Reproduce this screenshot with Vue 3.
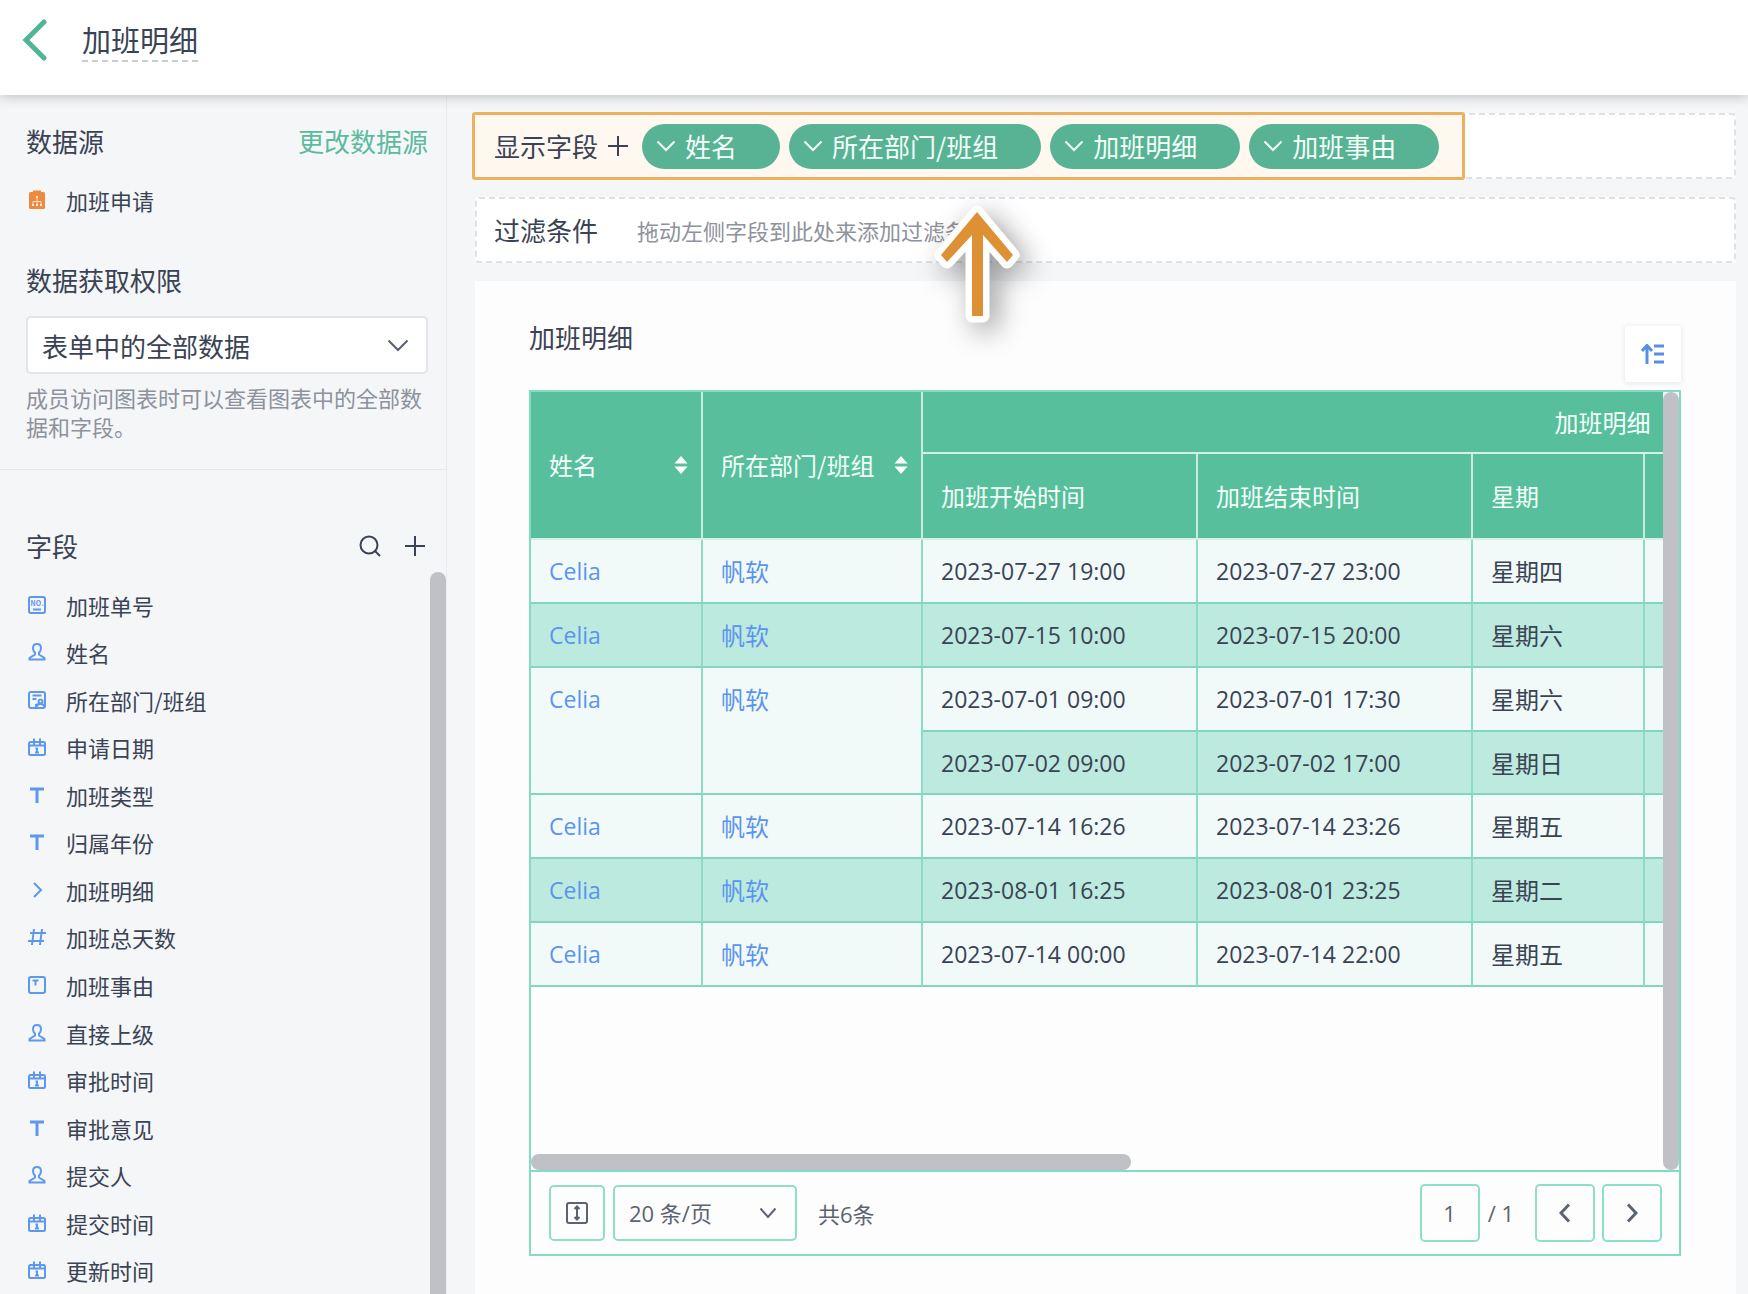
<template>
  <div class="page">
    <header class="topbar">
      <button class="back" type="button" aria-label="返回">
        <svg width="26" height="42" viewBox="0 0 26 42">
          <path d="M22 3L4 21l18 18" />
        </svg>
      </button>
      <h1 class="topbar-title">加班明细</h1>
    </header>

    <div class="body">
      <aside class="sidebar">
        <section class="source">
          <div class="row-between">
            <h2>数据源</h2>
            <a class="change-link" href="#">更改数据源</a>
          </div>
          <div class="source-form">
            <svg class="icon" width="18" height="20" viewBox="0 0 18 20">
              <path
                class="solid"
                d="M2.500 2H5V.5h8V2h2.500A1.500 1.500 0 0 1 17 3.500v14a1.500 1.500 0 0 1-1.500 1.500h-13A1.500 1.500 0 0 1 1 17.500v-14A1.500 1.500 0 0 1 2.500 2z"
              />
              <path class="lines" d="M9 8v6M5 14v-2.500h8V14" />
              <path class="dots" d="M8 6h2v2H8zM4 14h2v2H4zM8 14h2v2H8zM12 14h2v2h-2z" />
            </svg>
            <span>加班申请</span>
          </div>
          <h2><label for="scope">数据获取权限</label></h2>
          <div class="select-box scope">
            <select id="scope" v-model="scope">
              <option>表单中的全部数据</option>
            </select>
            <svg width="22" height="13" viewBox="0 0 22 13">
              <path d="M1.500 1.500L11 11l9.500-9.500" />
            </svg>
          </div>
          <p class="hint">成员访问图表时可以查看图表中的全部数据和字段。</p>
        </section>

        <section class="fields">
          <div class="row-between fields-head">
            <h2>字段</h2>
            <div class="tools">
              <button type="button" aria-label="搜索">
                <svg width="22" height="22" viewBox="0 0 22 22">
                  <circle cx="10" cy="10" r="8.500" />
                  <path d="M16 16l5 5" />
                </svg>
              </button>
              <button type="button" aria-label="添加字段">
                <svg width="22" height="22" viewBox="0 0 22 22">
                  <path d="M11 1v20M1 11h20" />
                </svg>
              </button>
            </div>
          </div>
          <div class="fields-scroll">
            <ul class="field-list">
              <li v-for="field in fields" :key="field.name">
                <svg class="field-icon" width="18" height="18" viewBox="0 0 18 18">
                  <path :d="icons[field.type]" :class="{ bold: field.type === 'text' }" />
                  <text v-if="field.type === 'serial'" x="9" y="10" text-anchor="middle">NO.</text>
                </svg>
                <span>{{ field.name }}</span>
              </li>
            </ul>
            <div class="thumb"></div>
          </div>
        </section>
      </aside>

      <main class="main">
        <div class="shelf">
          <div class="shelf-active">
            <span class="shelf-label">显示字段</span>
            <button class="add" type="button" aria-label="添加显示字段">
              <svg width="22" height="22" viewBox="0 0 22 22">
                <path d="M11 1v20M1 11h20" />
              </svg>
            </button>
            <button v-for="item in shown" :key="item" class="pill" type="button">
              <svg width="20" height="12" viewBox="0 0 20 12">
                <path d="M1.500 1.500L10 10l8.500-8.500" />
              </svg>
              <span>{{ item }}</span>
            </button>
          </div>
        </div>

        <div class="shelf filter">
          <span class="shelf-label">过滤条件</span>
          <span class="filter-hint">拖动左侧字段到此处来添加过滤条件</span>
          <svg class="arrow" width="100" height="132" viewBox="0 0 100 132">
            <path
              d="M50 9L86 52L80 59L56 32V113H45V32L20 59L14 52Z"
              fill="#fff"
              stroke="#fff"
              stroke-width="13"
              stroke-linejoin="round"
            />
            <path d="M50 9L86 52L80 59L56 32V113H45V32L20 59L14 52Z" fill="#dd9134" />
          </svg>
        </div>

        <section class="panel">
          <div class="panel-head">
            <h2>加班明细</h2>
            <button class="sort" type="button" aria-label="排序">
              <svg width="24" height="20" viewBox="0 0 24 20">
                <path d="M6 20V2M1 7l5-5.500L11 7M13 2h10M13 10h10M13 18h10" />
              </svg>
            </button>
          </div>

          <div class="grid">
            <div class="grid-view">
              <div class="table-clip">
                <table>
                  <colgroup>
                    <col class="c-name" />
                    <col class="c-dept" />
                    <col class="c-time" />
                    <col class="c-time" />
                    <col class="c-name" />
                    <col class="c-rest" />
                  </colgroup>
                  <thead>
                    <tr class="h-top">
                      <th v-for="name in sortable" :key="name" rowspan="2">
                        <div class="th-sort">
                          <span>{{ name }}</span>
                          <svg width="14" height="18" viewBox="0 0 14 18">
                            <path d="M7 0l6.500 7.500H.5zM7 18L.5 10.500h13z" />
                          </svg>
                        </div>
                      </th>
                      <th class="group" colspan="4">加班明细</th>
                    </tr>
                    <tr class="h-sub">
                      <th>加班开始时间</th>
                      <th>加班结束时间</th>
                      <th>星期</th>
                      <th></th>
                    </tr>
                  </thead>
                  <tbody>
                    <template v-for="(rec, i) in records" :key="i">
                      <tr v-for="(line, j) in rec.lines" :key="j" :class="{ striped: line.striped }">
                        <template v-if="j === 0">
                          <td :rowspan="rec.lines.length"><a href="#">Celia</a></td>
                          <td class="cjk" :rowspan="rec.lines.length"><a href="#">帆软</a></td>
                        </template>
                        <td>{{ line.start }}</td>
                        <td>{{ line.end }}</td>
                        <td class="cjk">{{ line.day }}</td>
                        <td></td>
                      </tr>
                    </template>
                  </tbody>
                </table>
              </div>
              <div class="vbar"><div class="thumb"></div></div>
              <div class="hbar"><div class="thumb"></div></div>
            </div>

            <div class="pager">
              <button class="pager-btn density" type="button" aria-label="行高">
                <svg width="22" height="22" viewBox="0 0 22 22">
                  <rect x="1" y="1" width="20" height="20" rx="2" />
                  <path d="M11 5v12M8.500 7L11 4.500 13.500 7M8.500 15l2.500 2.500 2.500-2.500" />
                </svg>
              </button>
              <div class="select-box page-size">
                <select v-model="pageSize" aria-label="每页条数">
                  <option>20 条/页</option>
                </select>
                <svg width="18" height="12" viewBox="0 0 18 12">
                  <path d="M1.500 1.500L9 10l7.500-8.500" />
                </svg>
              </div>
              <span class="total">共6条</span>
              <input v-model="page" class="page-input" type="text" aria-label="页码" />
              <span class="page-count">/ 1</span>
              <button class="pager-btn prev" type="button" aria-label="上一页">
                <svg width="12" height="20" viewBox="0 0 12 20"><path d="M10 1.500L2 10l8 8.500" /></svg>
              </button>
              <button class="pager-btn next" type="button" aria-label="下一页">
                <svg width="12" height="20" viewBox="0 0 12 20"><path d="M2 1.500l8 8.500-8 8.500" /></svg>
              </button>
            </div>
          </div>
        </section>
      </main>
    </div>
  </div>
</template>

<script setup>
import { ref } from "vue";

const scope = ref("表单中的全部数据");
const pageSize = ref("20 条/页");
const page = ref("1");

const box = "M3 1h12a2 2 0 0 1 2 2v12a2 2 0 0 1-2 2H3a2 2 0 0 1-2-2V3a2 2 0 0 1 2-2z";

const icons = {
  serial: box + "M5 13.500h8",
  user: "M9 1C6.500 1 5 2.800 5 5.200c0 2 .9 3.300 2 4.500v1.800L1.500 15v1.500h15V15L11 11.500V9.700c1.100-1.200 2-2.500 2-4.500C13 2.800 11.500 1 9 1z",
  dept: box + "M4.500 4.500h9M4.500 8h4M8 16v-2l2.500-1.200M12.500 8.500a2 2 0 1 0 .1 0M8.500 16.500c0-2 1.500-3.500 4-3.500s4 1.500 4 3.500",
  date: "M2.500 4h13a1.500 1.500 0 0 1 1.500 1.500v10a1.500 1.500 0 0 1-1.500 1.500h-13A1.500 1.500 0 0 1 1 15.500v-10A1.500 1.500 0 0 1 2.500 4zM6 .5v6M12 .5v6M1 7.500h16M7.500 10.500H9v4M7 14.500h4",
  text: "M2 3h14M9 3v14",
  sub: "M6 2l7 7-7 7",
  number: "M6 1L4 17M14 1l-2 16M2 5h16M0 13h16",
  area: box + "M4.500 4.500h6M7.500 4.500v5",
};

const fields = [
  { name: "加班单号", type: "serial" },
  { name: "姓名", type: "user" },
  { name: "所在部门/班组", type: "dept" },
  { name: "申请日期", type: "date" },
  { name: "加班类型", type: "text" },
  { name: "归属年份", type: "text" },
  { name: "加班明细", type: "sub" },
  { name: "加班总天数", type: "number" },
  { name: "加班事由", type: "area" },
  { name: "直接上级", type: "user" },
  { name: "审批时间", type: "date" },
  { name: "审批意见", type: "text" },
  { name: "提交人", type: "user" },
  { name: "提交时间", type: "date" },
  { name: "更新时间", type: "date" },
];

const shown = ["姓名", "所在部门/班组", "加班明细", "加班事由"];
const sortable = ["姓名", "所在部门/班组"];

const records = [
  { lines: [{ start: "2023-07-27 19:00", end: "2023-07-27 23:00", day: "星期四" }] },
  { lines: [{ start: "2023-07-15 10:00", end: "2023-07-15 20:00", day: "星期六", striped: true }] },
  {
    lines: [
      { start: "2023-07-01 09:00", end: "2023-07-01 17:30", day: "星期六" },
      { start: "2023-07-02 09:00", end: "2023-07-02 17:00", day: "星期日", striped: true },
    ],
  },
  { lines: [{ start: "2023-07-14 16:26", end: "2023-07-14 23:26", day: "星期五" }] },
  { lines: [{ start: "2023-08-01 16:25", end: "2023-08-01 23:25", day: "星期二", striped: true }] },
  { lines: [{ start: "2023-07-14 00:00", end: "2023-07-14 22:00", day: "星期五" }] },
];
</script>

<style>
body {
  margin: 0;
}
</style>

<style scoped>
.page {
  display: flex;
  flex-direction: column;
  min-height: 100vh;
  background: #f4f6f8;
  color: #3a4354;
  font-family: "Noto Sans CJK SC", sans-serif;
  font-size: 22px;
}

.page *,
.page *::before {
  box-sizing: border-box;
}

h1,
h2,
p,
ul {
  margin: 0;
  padding: 0;
  font-weight: 400;
}

h2 {
  font-size: 26px;
  line-height: 32px;
}

button,
input,
select {
  font: inherit;
  color: inherit;
  padding: 0;
  border: 0;
  background: none;
}

button {
  cursor: pointer;
}

svg {
  display: block;
  flex: none;
  fill: none;
  stroke: currentColor;
  stroke-width: 2;
}

a {
  color: #5b94ee;
  text-decoration: none;
}

/* top bar */
.topbar {
  display: flex;
  align-items: center;
  gap: 34px;
  height: 95px;
  padding: 0 22px 15px;
  background: #fff;
  box-shadow: 0 1px 12px rgba(0, 0, 0, 0.25);
  z-index: 2;
}

.back {
  color: #52b496;
}

.back svg {
  stroke-width: 5;
  stroke-linecap: round;
}

.topbar-title {
  font-size: 29px;
  line-height: 42px;
  border-bottom: 2px dashed #c9ccd1;
}

.body {
  display: flex;
  flex: 1;
}

/* sidebar */
.sidebar {
  display: flex;
  flex-direction: column;
  flex: none;
  width: 447px;
  border-right: 1px solid #e9ebee;
}

.row-between {
  display: flex;
  align-items: center;
  justify-content: space-between;
}

.source {
  padding: 30px 18px 28px 26px;
  border-bottom: 1px solid #e6e8eb;
}

.change-link {
  color: #5cbb9e;
  font-size: 26px;
  line-height: 32px;
}

.source-form {
  display: flex;
  align-items: center;
  gap: 20px;
  height: 32px;
  margin: 27px 0 48px;
}

.source-form .icon {
  margin-left: 2px;
  stroke: none;
}

.icon .solid {
  fill: #ee8a40;
}

.icon .lines {
  stroke: #fbdcc4;
  stroke-width: 1;
}

.icon .dots {
  fill: #fff1e6;
}

.select-box {
  display: grid;
  align-items: center;
  background: #fff;
  border: 2px solid #e3e5e8;
  border-radius: 5px;
}

.select-box select {
  grid-area: 1 / 1;
  appearance: none;
  width: 100%;
  height: 100%;
}

.select-box svg {
  grid-area: 1 / 1;
  justify-self: end;
  pointer-events: none;
}

.scope {
  height: 58px;
  margin: 20px 0 9px;
}

.scope select {
  padding-left: 14px;
  font-size: 26px;
}

.scope svg {
  margin-right: 17px;
  color: #596170;
}

.hint {
  color: #8d929c;
  line-height: 29px;
}

.fields {
  display: flex;
  flex-direction: column;
  flex: 1;
}

.fields-head {
  padding: 60px 20px 10px 26px;
}

.tools {
  display: flex;
  gap: 23px;
}

.fields-scroll {
  display: flex;
  flex: 1;
}

.field-list {
  display: grid;
  grid-auto-rows: 1fr;
  flex: 1;
  padding: 9px 0 0 28px;
  list-style: none;
}

.field-list li {
  display: flex;
  align-items: center;
  gap: 20px;
  line-height: 32px;
}

.field-icon {
  color: #5e97ee;
  overflow: visible;
}

.field-icon .bold {
  stroke-width: 3;
}

.field-icon text {
  font-size: 7px;
  font-weight: 700;
  fill: currentColor;
  stroke: none;
}

.thumb {
  background: #bfc1c6;
  border-radius: 8px;
}

.fields-scroll .thumb {
  width: 16px;
  border-radius: 8px 8px 0 0;
}

/* main area */
.main {
  display: flex;
  flex-direction: column;
  flex: 1;
  gap: 18px;
  min-width: 0;
  padding: 18px 12px 0 28px;
}

.shelf {
  position: relative;
  display: flex;
  align-items: center;
  height: 66px;
  background: #fff;
  border: 2px dashed #dfe1e4;
  border-radius: 4px;
}

.shelf-label {
  width: 104px;
  font-size: 26px;
  line-height: 32px;
}

.shelf-active {
  display: flex;
  align-items: center;
  gap: 9px;
  height: 68px;
  margin: 0 0 0 -5px;
  padding: 0 23px 0 19px;
  background: #fef8f1;
  border: 3px solid #ecb15c;
  border-radius: 3px;
}

.add {
  margin-right: 4px;
}

.pill {
  display: flex;
  align-items: center;
  gap: 9px;
  height: 45px;
  padding: 0 43px 0 14px;
  color: #f4fffa;
  background: #57b394;
  border-radius: 23px;
  font-size: 26px;
  line-height: 32px;
}

.filter {
  padding-left: 17px;
}

.filter-hint {
  margin-left: 39px;
  color: #8d929c;
}

/* callout arrow drawn over the shelves */
.arrow {
  position: absolute;
  left: 450px;
  top: 4px;
  overflow: visible;
  stroke: none;
  filter: drop-shadow(8px 8px 14px rgba(0, 0, 0, 0.4));
  z-index: 1;
}

.panel {
  display: flex;
  flex-direction: column;
  flex: 1;
  padding: 45px 55px 38px 54px;
  background: #fdfdfd;
}

.panel-head {
  display: flex;
  align-items: flex-start;
  justify-content: space-between;
  margin-bottom: 8px;
}

.panel-head h2 {
  line-height: 22px;
}

.sort {
  display: grid;
  place-items: center;
  width: 56px;
  height: 56px;
  color: #568ee8;
  background: #fff;
  box-shadow: 0 1px 6px rgba(70, 70, 140, 0.14);
}

.sort svg {
  stroke-width: 3;
}

.grid {
  display: flex;
  flex-direction: column;
  flex: 1;
  border: 2px solid #82dcc3;
}

.grid-view {
  display: grid;
  grid-template-columns: minmax(0, 1fr) 16px;
  grid-template-rows: minmax(0, 1fr) 16px;
  flex: 1;
}

.table-clip {
  overflow: hidden;
}

.vbar {
  grid-row: 1 / 3;
  grid-column: 2;
  display: grid;
}

.hbar {
  display: grid;
  grid-template-columns: 53%;
}

table {
  width: 1748px;
  height: 595px;
  table-layout: fixed;
  border-collapse: separate;
  border-spacing: 0;
}

.c-name {
  width: 172px;
}

.c-dept {
  width: 220px;
}

.c-time {
  width: 275px;
}

.c-rest {
  width: 634px;
}

th {
  padding: 0 13px 0 18px;
  color: #f4fffb;
  background: #58bf9c;
  border-right: 2px solid #c8ebdf;
  border-bottom: 2px solid #d5f0e7;
  font-size: 24px;
  font-weight: 400;
  line-height: 32px;
  text-align: left;
}

.h-top {
  height: 62px;
}

.h-sub {
  height: 86px;
}

.group {
  text-align: center;
}

.th-sort {
  display: flex;
  align-items: center;
  justify-content: space-between;
}

.th-sort svg {
  fill: #fff;
  stroke: none;
}

td {
  padding: 15px 14px 14px 18px;
  background: #f1faf8;
  border-right: 2px solid #8cdcc7;
  border-bottom: 2px solid #82d6be;
  font-family: "Open Sans", "Noto Sans CJK SC", sans-serif;
  font-size: 23px;
  line-height: 32px;
  vertical-align: top;
}

td.cjk {
  font-family: "Noto Sans CJK SC", sans-serif;
  font-size: 24px;
}

.striped td {
  background: #bdeadf;
}

/* pager */
.pager {
  display: flex;
  align-items: center;
  height: 84px;
  padding: 0 17px 0 18px;
  color: #5c6370;
  border-top: 2px solid #82dcc3;
  font-family: "Open Sans", "Noto Sans CJK SC", sans-serif;
}

.pager-btn,
.page-input,
.page-size {
  height: 58px;
  border: 2px solid #8cdfc8;
  border-radius: 5px;
}

.pager-btn {
  display: grid;
  place-items: center;
  width: 60px;
}

.pager-btn svg {
  stroke-width: 3;
}

.density {
  width: 56px;
  height: 56px;
}

.density svg {
  stroke-width: 2;
}

.page-size {
  width: 184px;
  height: 56px;
  margin: 0 21px 0 8px;
  background: none;
}

.page-size select {
  padding-left: 14px;
}

.page-size svg {
  margin-right: 18px;
}

.page-input {
  width: 60px;
  margin-left: auto;
  text-align: center;
}

.page-count {
  margin: 0 21px 0 8px;
}

.next {
  margin-left: 7px;
}
</style>
